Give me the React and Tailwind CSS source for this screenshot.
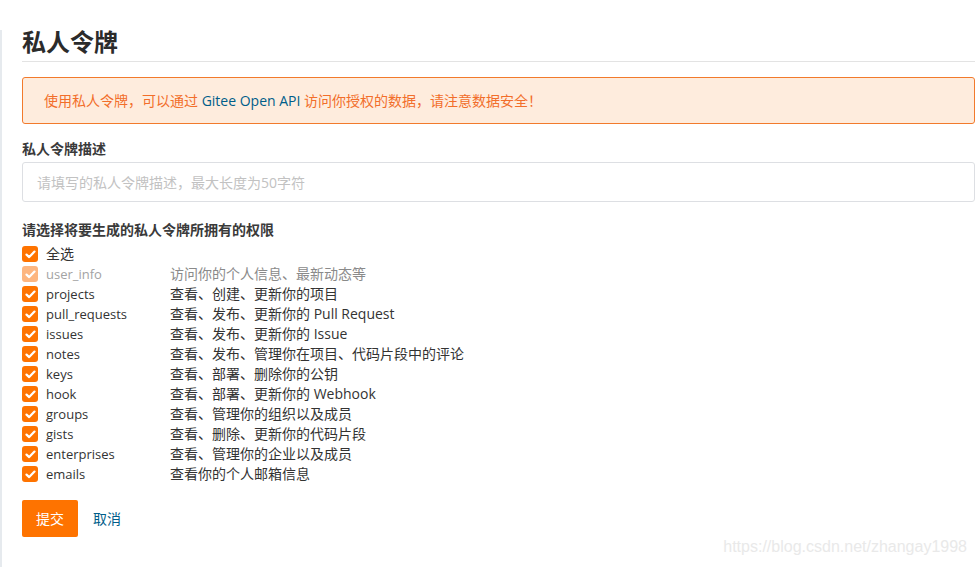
import React from "react";

const font = { fontFamily: '"Open Sans", "Noto Sans CJK SC", sans-serif' };

const scopes = [
  ["user_info", "访问你的个人信息、最新动态等", true],
  ["projects", "查看、创建、更新你的项目"],
  ["pull_requests", "查看、发布、更新你的 Pull Request"],
  ["issues", "查看、发布、更新你的 Issue"],
  ["notes", "查看、发布、管理你在项目、代码片段中的评论"],
  ["keys", "查看、部署、删除你的公钥"],
  ["hook", "查看、部署、更新你的 Webhook"],
  ["groups", "查看、管理你的组织以及成员"],
  ["gists", "查看、删除、更新你的代码片段"],
  ["enterprises", "查看、管理你的企业以及成员"],
  ["emails", "查看你的个人邮箱信息"],
];

function Check({ faded }) {
  return (
    <span
      className={`flex h-4 w-4 shrink-0 items-center justify-center rounded-[3px] ${
        faded ? "bg-[#fdb680]" : "bg-[#fe7300]"
      }`}
    >
      <svg width="11" height="9" viewBox="0 0 11 9" fill="none">
        <path
          d="M1.5 4.6 L4.2 7.1 L9.5 1.6"
          stroke="white"
          strokeWidth="2.2"
          strokeLinecap="round"
          strokeLinejoin="round"
        />
      </svg>
    </span>
  );
}

export default function App() {
  return (
    <div className="relative h-[567px] w-[976px] overflow-hidden bg-white" style={font}>
      <div className="flex h-full">
        <div className="mt-[30px] w-[2px] shrink-0 bg-[#e6eaee]" />
        <div className="flex-1 pl-[20px] pr-px">
          <h1 className="mt-[27px] h-[35px] border-b border-[#e3e3e3] text-[24px] font-bold leading-[30px] text-[#2b2b2b]">
            私人令牌
          </h1>

          <div className="mt-[15px] flex h-[47px] items-center rounded-[3px] border border-[#f27a2c] bg-[#feecdd] pl-[21px] text-[14px] text-[#f26e2a]">
            使用私人令牌，可以通过&nbsp;<span className="text-[#005e8a]">Gitee Open API</span>&nbsp;访问你授权的数据，请注意数据安全！
          </div>

          <div className="mt-[16px] text-[14px] font-bold leading-[18px] text-[#3a3a3a]">私人令牌描述</div>
          <div className="mt-[4px] flex h-[40px] items-center rounded-[3px] border border-[#dddfe3] pl-[14px] text-[14px] text-[#c2c2c2]">
            请填写的私人令牌描述，最大长度为50字符
          </div>

          <div className="mt-[19px] text-[14px] font-bold leading-[18px] text-[#3a3a3a]">
            请选择将要生成的私人令牌所拥有的权限
          </div>

          <div className="mt-[5px] flex flex-col text-[#333]">
            <label className="flex h-5 items-center">
              <Check />
              <span className="ml-[8px] text-[14px] leading-5">全选</span>
            </label>
            {scopes.map(([name, desc, faded]) => (
              <label key={name} className="flex h-5 items-center">
                <Check faded={faded} />
                <span className={`ml-[8px] w-[124px] text-[13px] leading-5 ${faded ? "text-[#a3a3a3]" : ""}`}>
                  {name}
                </span>
                <span className={`text-[14px] leading-5 ${faded ? "text-[#8a8a8a]" : ""}`}>{desc}</span>
              </label>
            ))}
          </div>

          <div className="mt-[16px] flex items-center">
            <button className="h-[37px] w-[56px] rounded-[2px] bg-[#fe7300] text-[14px] text-white">提交</button>
            <span className="ml-[15px] text-[14px] text-[#005e8a]">取消</span>
          </div>
        </div>
      </div>

      <div
        className="absolute bottom-[8px] right-[9px] text-[16px] text-[#e9e9e9]"
        style={{ fontFamily: '"Liberation Sans", Arial, sans-serif' }}
      >
        https://blog.csdn.net/zhangay1998
      </div>
    </div>
  );
}
